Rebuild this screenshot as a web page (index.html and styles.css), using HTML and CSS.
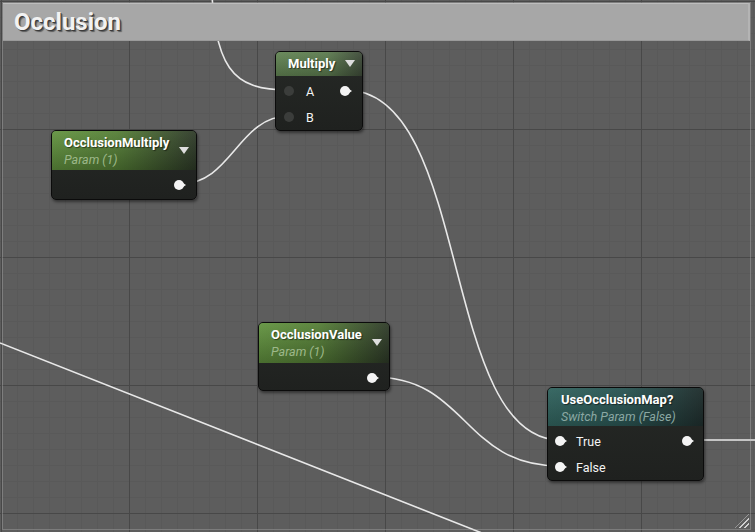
FILE: index.html
```html
<!DOCTYPE html>
<html>
<head>
<meta charset="utf-8">
<link rel="stylesheet" href="styles.css">
</head>
<body>
<div class="canvas">
  <svg class="wires" width="755" height="532" viewBox="0 0 755 532">
    <g fill="none" stroke="#e8e8e8" stroke-width="1.6">
      <path d="M211,-30 C213,70 232,90 289,90"/>
      <path d="M180,184 C232,184 238,116 289,116"/>
      <path d="M346,90 C472,90 440,440 560,440"/>
      <path d="M373,377 C468,377 462,466 560,466"/>
      <path d="M687,440 L760,440"/>
      <path d="M0,343 L487,535"/>
    </g>
  </svg>

  <div class="comment">
    <div class="comment-head">Occlusion</div>
    <div class="grip"></div>
  </div>

  <div class="node n-mul">
    <div class="head head-gray">
      <div class="titles"><div class="title">Multiply</div></div>
      <span class="tri"></span>
    </div>
    <div class="body">
      <div class="row">
        <div class="pin-in"><span class="dot dim"></span><span class="lbl">A</span></div>
        <span class="dot out"></span>
      </div>
      <div class="row">
        <div class="pin-in"><span class="dot dim"></span><span class="lbl">B</span></div>
      </div>
    </div>
  </div>

  <div class="node n-om">
    <div class="head head-green">
      <div class="titles"><div class="title">OcclusionMultiply</div><div class="sub">Param (1)</div></div>
      <span class="tri"></span>
    </div>
    <div class="body">
      <div class="row end"><span class="dot out"></span></div>
    </div>
  </div>

  <div class="node n-ov">
    <div class="head head-green">
      <div class="titles"><div class="title">OcclusionValue</div><div class="sub">Param (1)</div></div>
      <span class="tri"></span>
    </div>
    <div class="body">
      <div class="row end"><span class="dot out"></span></div>
    </div>
  </div>

  <div class="node n-sw">
    <div class="head head-teal">
      <div class="titles"><div class="title">UseOcclusionMap?</div><div class="sub">Switch Param (False)</div></div>
    </div>
    <div class="body">
      <div class="row">
        <div class="pin-in"><span class="dot out"></span><span class="lbl">True</span></div>
        <span class="dot out"></span>
      </div>
      <div class="row">
        <div class="pin-in"><span class="dot out"></span><span class="lbl">False</span></div>
      </div>
    </div>
  </div>
</div>
</body>
</html>
```

FILE: styles.css
```css
* { box-sizing: border-box; }
html, body { margin: 0; padding: 0; }
body { width: 755px; height: 532px; overflow: hidden; background: #5b5b5b; font-family: Roboto, "Liberation Sans", sans-serif; }

.canvas {
  position: relative;
  width: 755px;
  height: 532px;
  overflow: hidden;
  background-color: #5d5d5d;
  background-image:
    linear-gradient(to right, #484848 1px, transparent 1px),
    linear-gradient(to bottom, #484848 1px, transparent 1px),
    linear-gradient(to right, #595959 1px, transparent 1px),
    linear-gradient(to bottom, #595959 1px, transparent 1px);
  background-size: 128px 128px, 128px 128px, 16px 16px, 16px 16px;
  background-position: 1px 1px, 1px 1px, 1px 1px, 1px 1px;
}

.wires { position: absolute; left: 0; top: 0; }

.comment {
  position: absolute;
  left: 2px;
  top: 2px;
  width: 749px;
  height: 528px;
  border: 1px solid rgba(190,190,190,0.35);
}
.comment-head {
  height: 38px;
  background: #a7a7a7;
  border-top: 1px solid #bdbdbd;
  border-right: 2px solid #b4b4b4;
  border-bottom: 1px solid #9a9a9a;
  padding: 3px 0 0 11px;
  font-size: 24px;
  font-weight: bold;
  line-height: 30px;
  color: #f2f2f2;
  text-shadow: 1px 1px 0 #3a3a3a, 2px 2px 1px rgba(0,0,0,0.45);
}
.grip {
  position: absolute;
  right: 1px;
  bottom: 1px;
  width: 14px;
  height: 14px;
  background: repeating-linear-gradient(135deg, transparent 0 2px, #cfcfcf 2px 3.5px);
  clip-path: polygon(100% 0, 100% 100%, 0 100%);
}

.node {
  position: absolute;
  border: 1px solid #0b0b0b;
  border-radius: 5px;
  background: linear-gradient(to bottom, #262926, #1f211f);
  box-shadow: 1px 2px 3px rgba(0,0,0,0.45);
  overflow: hidden;
  color: #fff;
}
.head {
  display: flex;
  justify-content: space-between;
  align-items: flex-start;
  padding: 4px 7px 0 12px;
}
.title { font-size: 13px; font-weight: bold; line-height: 16px; text-shadow: 1px 1px 1px rgba(0,0,0,0.5); }
.sub { font-size: 12.5px; font-style: italic; line-height: 16px; margin-top: 1px; }
.tri {
  width: 0; height: 0;
  border-left: 5.5px solid transparent;
  border-right: 5.5px solid transparent;
  border-top: 7px solid #dedede;
  margin-top: 12px;
}
.head-green {
  background:
    linear-gradient(to bottom, rgba(255,255,255,0.06), rgba(0,0,0,0.25)),
    linear-gradient(to right, #62933f 0%, #557f36 45%, #2e3a28 100%);
}
.head-green .sub { color: #9db88a; }
.head-gray {
  height: 24px;
  padding-top: 4px;
  background:
    linear-gradient(to bottom, rgba(255,255,255,0.06), rgba(0,0,0,0.2)),
    linear-gradient(to right, #628453 0%, #5b7a4e 60%, #3d4a38 100%);
}
.head-gray .tri { margin-top: 4px; }
.head-teal {
  padding-left: 13px;
  background:
    linear-gradient(to bottom, rgba(255,255,255,0.04), rgba(0,0,0,0.2)),
    linear-gradient(to right, #32645f 0%, #2a5553 50%, #1f2e2d 100%);
}
.head-teal .sub { color: #8ba8a3; }

.body { padding: 2px 9px 0 7px; }
.row { height: 26px; display: flex; align-items: center; justify-content: space-between; }
.row.end { justify-content: flex-end; }
.pin-in { display: flex; align-items: center; }
.lbl { font-size: 12.5px; margin-left: 8px; color: #f4f4f4; }
.dot {
  position: relative;
  width: 10px;
  height: 10px;
  border-radius: 50%;
  background: #f4f4f4;
  margin-right: 3px;
}
.dot.out::after {
  content: "";
  position: absolute;
  left: 9px;
  top: 2.5px;
  border-top: 2.5px solid transparent;
  border-bottom: 2.5px solid transparent;
  border-left: 3px solid #f4f4f4;
}
.dot.dim { background: #3b3d3b; }

.n-mul { left: 275px; top: 51px; width: 88px; height: 80px; }
.n-mul .body { padding-left: 8px; }
.n-mul .lbl { margin-left: 9px; }
.n-om { left: 51px; top: 130px; width: 146px; height: 70px; }
.n-om .head { height: 39px; }
.n-om .body { padding-top: 2px; padding-right: 9px; }
.n-ov { left: 258px; top: 322px; width: 132px; height: 69px; }
.n-ov .head { height: 40px; }
.n-ov .body { padding-top: 2px; padding-right: 9px; }
.n-sw { left: 547px; top: 387px; width: 157px; height: 94px; }
.n-sw .head { height: 38px; }
.n-sw .body { padding-right: 8px; }
```
